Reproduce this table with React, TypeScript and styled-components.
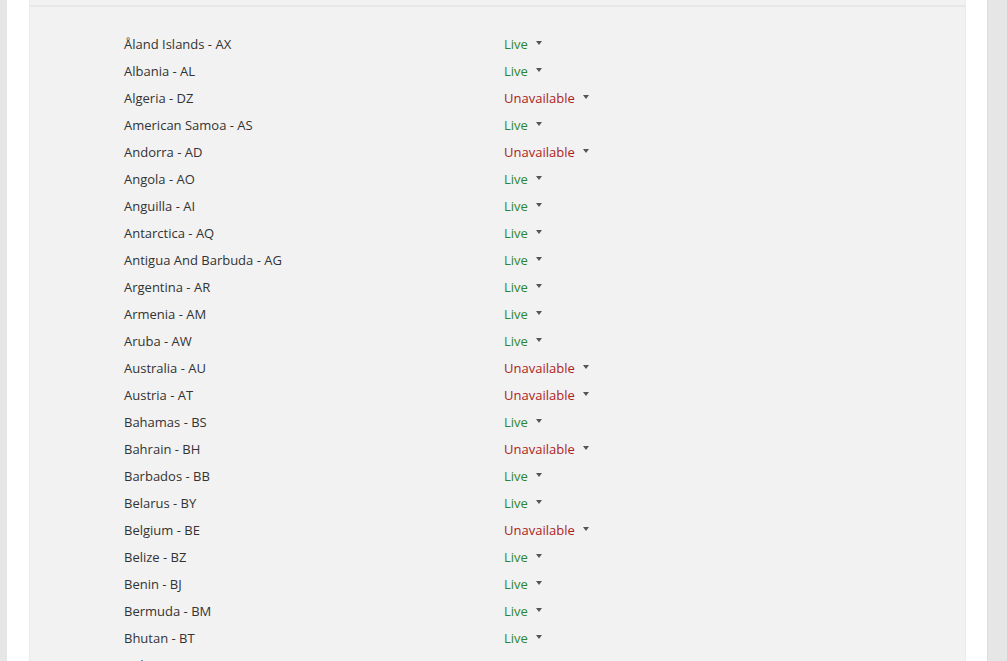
import React from "react";
import styled, { createGlobalStyle } from "styled-components";

const Global = createGlobalStyle`
  html, body { margin: 0; padding: 0; height: 100%; overflow: hidden; }
  body { background: #e6e6e6; font-family: "Open Sans", "Noto Sans", sans-serif; }
`;

const Page = styled.div`
  display: flex;
  height: 661px;
  padding-left: 7px;
  box-sizing: border-box;
`;

const Sheet = styled.div`
  width: 981px;
  flex: none;
  background: #ffffff;
  border-right: 1px solid #dcdcdc;
  padding: 0 21px 0 22px;
  box-sizing: border-box;
  height: 100%;
  overflow: hidden;
`;

const Panel = styled.div`
  background: #f2f2f2;
  height: 100%;
  border-left: 1px solid #ececec;
  border-right: 1px solid #ececec;
`;

const TopEdge = styled.div`
  height: 5px;
  border-bottom: 2px solid #e7e7e7;
`;

const List = styled.div`
  display: flex;
  flex-direction: column;
  padding: 23px 0 0 94px;
`;

const Row = styled.div`
  display: grid;
  grid-template-columns: 380px auto;
  height: 27px;
  align-items: center;
  font-size: 13px;
`;

const Country = styled.span`
  color: #333333;
`;

const Status = styled.span<{ $live: boolean }>`
  display: inline-flex;
  align-items: center;
  gap: 8px;
  color: ${(p) => (p.$live ? "#2e8530" : "#ad2222")};
`;

const Caret = styled.span`
  width: 0;
  height: 0;
  border-left: 3.5px solid transparent;
  border-right: 3.5px solid transparent;
  border-top: 4px solid #555555;
  margin-top: -2px;
`;

const rows: [string, boolean][] = [
  ["Åland Islands - AX", true],
  ["Albania - AL", true],
  ["Algeria - DZ", false],
  ["American Samoa - AS", true],
  ["Andorra - AD", false],
  ["Angola - AO", true],
  ["Anguilla - AI", true],
  ["Antarctica - AQ", true],
  ["Antigua And Barbuda - AG", true],
  ["Argentina - AR", true],
  ["Armenia - AM", true],
  ["Aruba - AW", true],
  ["Australia - AU", false],
  ["Austria - AT", false],
  ["Bahamas - BS", true],
  ["Bahrain - BH", false],
  ["Barbados - BB", true],
  ["Belarus - BY", true],
  ["Belgium - BE", false],
  ["Belize - BZ", true],
  ["Benin - BJ", true],
  ["Bermuda - BM", true],
  ["Bhutan - BT", true],
  ["Bolivia - BO", true],
];

export default function App() {
  return (
    <>
      <Global />
      <Page>
        <Sheet>
          <Panel>
            <TopEdge />
            <List>
              {rows.map(([name, live]) => (
                <Row key={name}>
                  <Country>{name}</Country>
                  <Status $live={live}>
                    {live ? "Live" : "Unavailable"}
                    <Caret />
                  </Status>
                </Row>
              ))}
            </List>
          </Panel>
        </Sheet>
      </Page>
    </>
  );
}
